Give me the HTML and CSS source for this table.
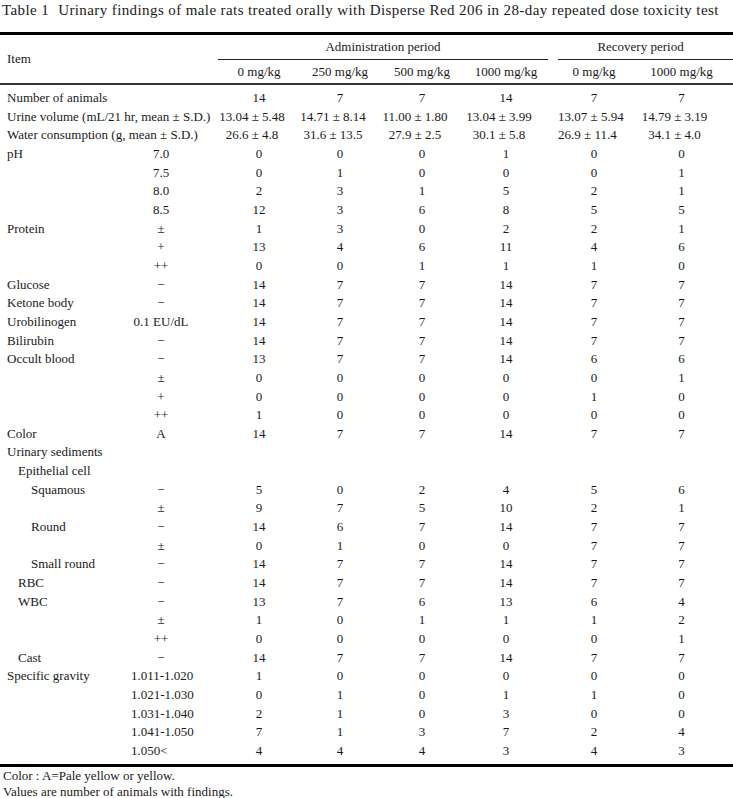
FILE: index.html
```html
<!DOCTYPE html>
<html lang="en">
<head>
<meta charset="utf-8">
<title>Table 1</title>
<link rel="stylesheet" href="styles.css">
</head>
<body>
<div class="caption"><span class="label">Table 1</span>Urinary findings of male rats treated orally with Disperse Red 206 in 28-day repeated dose toxicity test</div>
<table class="tbl">
<colgroup>
<col class="c-item"><col class="c-sub"><col class="c-gap"><col class="c-d1"><col class="c-d2"><col class="c-d3"><col class="c-d4"><col class="c-gap2"><col class="c-d5"><col class="c-d6">
</colgroup>
<thead>
<tr class="h1">
<th class="item" rowspan="2" colspan="3">Item</th>
<th class="grp" colspan="4">Administration period</th>
<th class="gapc"></th>
<th class="grp rec" colspan="2">Recovery period</th>
</tr>
<tr class="h2">
<th>0 mg/kg</th><th>250 mg/kg</th><th>500 mg/kg</th><th>1000 mg/kg</th><th></th><th>0 mg/kg</th><th>1000 mg/kg</th>
</tr>
</thead>
<tbody>
<tr class="spacer"><td colspan="10"></td></tr>
<tr><td class="l0" colspan="3">Number of animals</td><td>14</td><td>7</td><td>7</td><td>14</td><td></td><td>7</td><td>7</td></tr>
<tr><td class="l0" colspan="3">Urine volume (mL/21 hr, mean ± S.D.)</td><td class="dec">13.04 ± 5.48</td><td class="dec">14.71 ± 8.14</td><td class="dec">11.00 ± 1.80</td><td class="dec">13.04 ± 3.99</td><td></td><td class="dec">13.07 ± 5.94</td><td class="dec">14.79 ± 3.19</td></tr>
<tr><td class="l0" colspan="3">Water consumption (g, mean ± S.D.)</td><td class="dec">26.6 ± 4.8</td><td class="dec">31.6 ± 13.5</td><td class="dec">27.9 ± 2.5</td><td class="dec">30.1 ± 5.8</td><td></td><td class="dec">26.9 ± 11.4</td><td class="dec">34.1 ± 4.0</td></tr>
<tr><td class="l0">pH</td><td class="sub">7.0</td><td></td><td>0</td><td>0</td><td>0</td><td>1</td><td></td><td>0</td><td>0</td></tr>
<tr><td></td><td class="sub">7.5</td><td></td><td>0</td><td>1</td><td>0</td><td>0</td><td></td><td>0</td><td>1</td></tr>
<tr><td></td><td class="sub">8.0</td><td></td><td>2</td><td>3</td><td>1</td><td>5</td><td></td><td>2</td><td>1</td></tr>
<tr><td></td><td class="sub">8.5</td><td></td><td>12</td><td>3</td><td>6</td><td>8</td><td></td><td>5</td><td>5</td></tr>
<tr><td class="l0">Protein</td><td class="sub">±</td><td></td><td>1</td><td>3</td><td>0</td><td>2</td><td></td><td>2</td><td>1</td></tr>
<tr><td></td><td class="sub">+</td><td></td><td>13</td><td>4</td><td>6</td><td>11</td><td></td><td>4</td><td>6</td></tr>
<tr><td></td><td class="sub">++</td><td></td><td>0</td><td>0</td><td>1</td><td>1</td><td></td><td>1</td><td>0</td></tr>
<tr><td class="l0">Glucose</td><td class="sub">−</td><td></td><td>14</td><td>7</td><td>7</td><td>14</td><td></td><td>7</td><td>7</td></tr>
<tr><td class="l0">Ketone body</td><td class="sub">−</td><td></td><td>14</td><td>7</td><td>7</td><td>14</td><td></td><td>7</td><td>7</td></tr>
<tr><td class="l0">Urobilinogen</td><td class="sub">0.1 EU/dL</td><td></td><td>14</td><td>7</td><td>7</td><td>14</td><td></td><td>7</td><td>7</td></tr>
<tr><td class="l0">Bilirubin</td><td class="sub">−</td><td></td><td>14</td><td>7</td><td>7</td><td>14</td><td></td><td>7</td><td>7</td></tr>
<tr><td class="l0">Occult blood</td><td class="sub">−</td><td></td><td>13</td><td>7</td><td>7</td><td>14</td><td></td><td>6</td><td>6</td></tr>
<tr><td></td><td class="sub">±</td><td></td><td>0</td><td>0</td><td>0</td><td>0</td><td></td><td>0</td><td>1</td></tr>
<tr><td></td><td class="sub">+</td><td></td><td>0</td><td>0</td><td>0</td><td>0</td><td></td><td>1</td><td>0</td></tr>
<tr><td></td><td class="sub">++</td><td></td><td>1</td><td>0</td><td>0</td><td>0</td><td></td><td>0</td><td>0</td></tr>
<tr><td class="l0">Color</td><td class="sub">A</td><td></td><td>14</td><td>7</td><td>7</td><td>14</td><td></td><td>7</td><td>7</td></tr>
<tr><td class="l0" colspan="3">Urinary sediments</td><td></td><td></td><td></td><td></td><td></td><td></td><td></td></tr>
<tr><td class="l1" colspan="3">Epithelial cell</td><td></td><td></td><td></td><td></td><td></td><td></td><td></td></tr>
<tr><td class="l2">Squamous</td><td class="sub">−</td><td></td><td>5</td><td>0</td><td>2</td><td>4</td><td></td><td>5</td><td>6</td></tr>
<tr><td></td><td class="sub">±</td><td></td><td>9</td><td>7</td><td>5</td><td>10</td><td></td><td>2</td><td>1</td></tr>
<tr><td class="l2">Round</td><td class="sub">−</td><td></td><td>14</td><td>6</td><td>7</td><td>14</td><td></td><td>7</td><td>7</td></tr>
<tr><td></td><td class="sub">±</td><td></td><td>0</td><td>1</td><td>0</td><td>0</td><td></td><td>7</td><td>7</td></tr>
<tr><td class="l2">Small round</td><td class="sub">−</td><td></td><td>14</td><td>7</td><td>7</td><td>14</td><td></td><td>7</td><td>7</td></tr>
<tr><td class="l1">RBC</td><td class="sub">−</td><td></td><td>14</td><td>7</td><td>7</td><td>14</td><td></td><td>7</td><td>7</td></tr>
<tr><td class="l1">WBC</td><td class="sub">−</td><td></td><td>13</td><td>7</td><td>6</td><td>13</td><td></td><td>6</td><td>4</td></tr>
<tr><td></td><td class="sub">±</td><td></td><td>1</td><td>0</td><td>1</td><td>1</td><td></td><td>1</td><td>2</td></tr>
<tr><td></td><td class="sub">++</td><td></td><td>0</td><td>0</td><td>0</td><td>0</td><td></td><td>0</td><td>1</td></tr>
<tr><td class="l1">Cast</td><td class="sub">−</td><td></td><td>14</td><td>7</td><td>7</td><td>14</td><td></td><td>7</td><td>7</td></tr>
<tr><td class="l0">Specific gravity</td><td class="sub sg">1.011-1.020</td><td></td><td>1</td><td>0</td><td>0</td><td>0</td><td></td><td>0</td><td>0</td></tr>
<tr><td></td><td class="sub sg">1.021-1.030</td><td></td><td>0</td><td>1</td><td>0</td><td>1</td><td></td><td>1</td><td>0</td></tr>
<tr><td></td><td class="sub sg">1.031-1.040</td><td></td><td>2</td><td>1</td><td>0</td><td>3</td><td></td><td>0</td><td>0</td></tr>
<tr><td></td><td class="sub sg">1.041-1.050</td><td></td><td>7</td><td>1</td><td>3</td><td>7</td><td></td><td>2</td><td>4</td></tr>
<tr><td></td><td class="sub sg">1.050&lt;</td><td></td><td>4</td><td>4</td><td>4</td><td>3</td><td></td><td>4</td><td>3</td></tr>
<tr class="endrow"><td colspan="10"></td></tr>
</tbody>
</table>
<div class="notes">
<p>Color : A=Pale yellow or yellow.</p>
<p>Values are number of animals with findings.</p>
</div>
</body>
</html>
```
FILE: styles.css
```css
html, body {
  margin: 0;
  padding: 0;
  background: #fff;
}
body {
  width: 733px;
  font-family: "Liberation Serif", "DejaVu Serif", serif;
  color: #1a1a1a;
}
.caption {
  font-size: 15px;
  letter-spacing: 0.4px;
  line-height: 20px;
  height: 20px;
  padding-left: 2px;
  margin-bottom: 11.5px;
  white-space: nowrap;
}
.caption .label {
  margin-right: 9px;
}
.tbl {
  width: 733px;
  table-layout: fixed;
  border-collapse: separate;
  border-spacing: 0;
  font-size: 13px;
}
.c-item { width: 120px; }
.c-sub { width: 80px; }
.c-gap { width: 18px; }
.c-d1 { width: 82px; }
.c-d2 { width: 80px; }
.c-d3 { width: 84px; }
.c-d4 { width: 84px; }
.c-gap2 { width: 10px; }
.c-d5 { width: 72px; }
.c-d6 { width: 103px; }

.tbl th {
  font-weight: normal;
  padding: 0;
  white-space: nowrap;
  text-align: center;
}
.h1 th {
  border-top: 3px solid #000;
  height: 24px;
  line-height: 24px;
  vertical-align: middle;
}
.h1 th.grp {
  border-bottom: 1px solid #222;
}
.h1 th.rec {
  padding-right: 10px;
}
.h1 th.item {
  text-align: left;
  padding-left: 7px;
  border-bottom: 2px solid #333;
}
.h2 th {
  height: 23.5px;
  line-height: 23.5px;
  border-bottom: 2px solid #333;
}
.tbl td {
  padding: 0;
  height: 18.66px;
  line-height: 18.66px;
  text-align: center;
  white-space: nowrap;
  vertical-align: middle;
}
.tbl td.l0 { text-align: left; padding-left: 7px; }
.tbl td.l1 { text-align: left; padding-left: 18px; }
.tbl td.l2 { text-align: left; padding-left: 31px; }
.tbl td.sub { padding-left: 2px; }
.tbl td.sg { text-align: left; padding-left: 11px; }
.tbl td.dec { padding-right: 14px; }
.tbl tr.spacer td {
  height: 4px;
  line-height: 4px;
  font-size: 0;
}
.tbl tr.endrow td {
  height: 3px;
  line-height: 3px;
  font-size: 0;
  border-bottom: 3px solid #000;
}
.notes {
  font-size: 13px;
  line-height: 16px;
  padding-left: 3px;
  padding-top: 1px;
}
.notes p {
  margin: 0;
}
```
